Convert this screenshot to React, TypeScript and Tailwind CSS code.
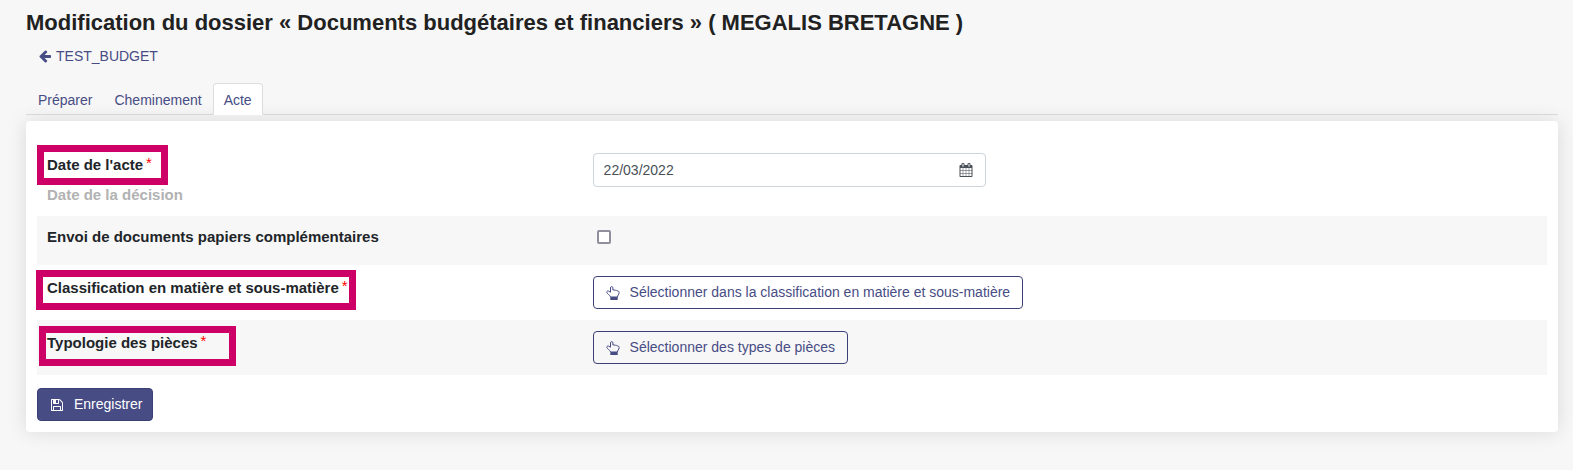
import { useState } from "react";
import type { ReactNode } from "react";

const tabs = ["Préparer", "Cheminement", "Acte"];

const icons = {
  arrowLeft:
    "M1664 896v128q0 53-32.5 90.5t-84.5 37.5h-704l293 294q38 36 38 90t-38 90l-75 76q-37 37-90 37-52 0-91-37l-651-652q-37-37-37-90 0-52 37-91l651-650q38-38 91-38 52 0 90 38l75 74q38 38 38 91t-38 91l-293 293h704q52 0 84.5 37.5t32.5 90.5z",
  calendar:
    "M192 1664h288v-288h-288v288zm352 0h320v-288h-320v288zm-352-352h288v-320h-288v320zm352 0h320v-320h-320v320zm-352-384h288v-288h-288v288zm736 736h320v-288h-320v288zm-384-736h320v-288h-320v288zm768 736h288v-288h-288v288zm-384-352h320v-320h-320v320zm-352-864v-288q0-13-9.5-22.5t-22.5-9.5h-64q-13 0-22.5 9.5t-9.5 22.5v288q0 13 9.5 22.5t22.5 9.5h64q13 0 22.5-9.5t9.5-22.5zm736 864h288v-320h-288v320zm-384-384h320v-288h-320v288zm384 0h288v-288h-288v288zm32-480v-288q0-13-9.5-22.5t-22.5-9.5h-64q-13 0-22.5 9.5t-9.5 22.5v288q0 13 9.5 22.5t22.5 9.5h64q13 0 22.5-9.5t9.5-22.5zm384-64v1280q0 52-38 90t-90 38h-1408q-52 0-90-38t-38-90v-1280q0-52 38-90t90-38h128v-96q0-66 47-113t113-47h64q66 0 113 47t47 113v96h384v-96q0-66 47-113t113-47h64q66 0 113 47t47 113v96h128q52 0 90 38t38 90z",
  save: "M512 1536h768v-384h-768v384zm896 0h128v-896q0-14-10-38.5t-20-34.5l-281-281q-10-10-34-20t-39-10v416q0 40-28 68t-68 28h-576q-40 0-68-28t-28-68v-416h-128v1280h128v-416q0-40 28-68t68-28h832q40 0 68 28t28 68v416zm-384-928v-320q0-13-9.5-22.5t-22.5-9.5h-192q-13 0-22.5 9.5t-9.5 22.5v320q0 13 9.5 22.5t22.5 9.5h192q13 0 22.5-9.5t9.5-22.5zm640 32v928q0 40-28 68t-68 28h-1344q-40 0-68-28t-28-68v-1344q0-40 28-68t68-28h928q40 0 88 20t76 48l280 280q28 28 48 76t20 88z",
};

function Icon({ path }: { path: string }) {
  return (
    <svg viewBox="0 0 1792 1792" className="size-3.5 shrink-0 fill-current" aria-hidden="true">
      <path d={path} />
    </svg>
  );
}

function HandIcon() {
  return (
    <svg viewBox="0 0 14 14" className="size-3.5 shrink-0" fill="none" aria-hidden="true">
      <path
        d="M4.5 11C4.5 10 2.8 8.8 1.4 7.4C0.2 6 1 4.7 2.4 5L4.5 6.2V1.8C4.5 0.2 6.9 0.2 6.9 1.8V4C7.7 3.7 8.6 3.8 9 4.4C9.8 4 10.7 4.3 11 4.9C12.3 4.7 13.1 5.4 13.1 6.6C13.1 8.6 11.5 9.4 11.4 11"
        stroke="currentColor"
        strokeLinejoin="round"
      />
      <path d="M4.3 10.5H11.7V14H4.3Z" fill="currentColor" />
    </svg>
  );
}

function Required() {
  return <span className="ml-[3px] align-[2px] leading-none text-[#ff0000] font-normal">*</span>;
}

// Frame drawn over a label the user must fill in
function Highlight({ className }: { className: string }) {
  return (
    <span className={`absolute h-10 border-7 border-[#cc0066] pointer-events-none ${className}`} />
  );
}

function Row({ label, children, shaded }: { label: ReactNode; children: ReactNode; shaded?: boolean }) {
  return (
    <div className={`grid grid-cols-[36%_64%] ${shaded ? "bg-[#f7f7f7]" : ""}`}>
      <div className="relative px-2.5 text-[15px] font-bold">{label}</div>
      <div className="py-[11px] pl-3 pr-2.5">{children}</div>
    </div>
  );
}

function SelectButton({ id, children }: { id: string; children: ReactNode }) {
  return (
    <button
      id={id}
      type="button"
      className="flex items-center gap-2.5 rounded border border-[#3b4077] pl-2.5 pr-3 py-1.5 leading-[19px] text-[#474c85] hover:bg-[#eeeef6]"
    >
      <span className="pl-0.5">
        <HandIcon />
      </span>
      {children}
    </button>
  );
}

export default function App() {
  const [activeTab, setActiveTab] = useState("Acte");
  const [date, setDate] = useState("22/03/2022");
  const [paper, setPaper] = useState(false);

  return (
    <div className="min-h-screen bg-[#f7f7f7] pl-[26px] pr-[15px] pt-2 pb-9 font-['Liberation_Sans',Arial,sans-serif] text-sm text-[#212529]">
      <h1 className="text-[22px] leading-[30px] font-bold text-[#212121]">
        Modification du dossier « Documents budgétaires et financiers » ( MEGALIS BRETAGNE )
      </h1>

      <a href="#" className="mt-2 ml-3 inline-flex items-center gap-1 leading-5 text-[#474c85]">
        <Icon path={icons.arrowLeft} />
        TEST_BUDGET
      </a>

      {/* Tabs */}
      <nav className="mt-[15px] flex border-b border-[#dddddd] pl-px">
        {tabs.map((tab) => (
          <a
            key={tab}
            href="#"
            onClick={() => setActiveTab(tab)}
            className={`-mb-px rounded-t border px-2.5 pt-1.5 pb-1 leading-5 text-[#474c85] ${
              activeTab === tab ? "border-[#dddddd] border-b-white bg-white" : "border-transparent"
            }`}
          >
            {tab}
          </a>
        ))}
      </nav>

      <form
        onSubmit={(e) => e.preventDefault()}
        className="mt-1.5 rounded bg-white px-[11px] pt-[21px] pb-[11px] shadow-[0_0_20px_rgba(0,0,0,0.12)]"
      >
        <Row
          label={
            <div className="pt-[13px]">
              <label htmlFor="date" className="block h-5 leading-5">
                Date de l'acte
                <Required />
              </label>
              <p className="mt-2.5 mb-[11px] leading-5 text-[#b2b2b2]">Date de la décision</p>
              <Highlight className="left-0 top-[3px] w-[131px]" />
            </div>
          }
        >
          <div className="flex h-[34px] w-5/12 items-center rounded border border-[#ced4da] bg-white pl-2.5 pr-3 text-[#495057]">
            <input
              id="date"
              type="text"
              value={date}
              onChange={(e) => setDate(e.target.value)}
              className="min-w-0 flex-1 bg-transparent outline-none"
            />
            <button type="button" aria-label="Choisir une date">
              <Icon path={icons.calendar} />
            </button>
          </div>
        </Row>

        <Row
          shaded
          label={
            <label htmlFor="paper" className="block pt-[11px] pb-[18px] leading-5">
              Envoi de documents papiers complémentaires
            </label>
          }
        >
          <input
            id="paper"
            type="checkbox"
            checked={paper}
            onChange={(e) => setPaper(e.target.checked)}
            className="mt-[3px] ml-1 block size-3.5 appearance-none rounded-xs border-2 border-[#8f8f9d] bg-white checked:bg-[#474c85]"
          />
        </Row>

        <Row
          label={
            <div className="pt-[13px]">
              <label htmlFor="classification" className="block h-5 leading-5">
                Classification en matière et sous-matière
                <Required />
              </label>
              <Highlight className="-left-px top-[5px] w-80" />
            </div>
          }
        >
          <SelectButton id="classification">
            Sélectionner dans la classification en matière et sous-matière
          </SelectButton>
        </Row>

        <Row
          shaded
          label={
            <div className="pt-[13px]">
              <label htmlFor="typologie" className="block h-5 leading-5">
                Typologie des pièces
                <Required />
              </label>
              <Highlight className="left-0.5 top-1.5 w-[197px]" />
            </div>
          }
        >
          <SelectButton id="typologie">Sélectionner des types de pièces</SelectButton>
        </Row>

        <button
          type="submit"
          className="mt-[13px] flex items-center gap-2.5 rounded border border-[#3b4077] bg-[#474c85] px-2.5 py-1.5 leading-[19px] text-white hover:bg-[#3b4077]"
        >
          <span className="pl-0.5">
            <Icon path={icons.save} />
          </span>
          Enregistrer
        </button>
      </form>
    </div>
  );
}
